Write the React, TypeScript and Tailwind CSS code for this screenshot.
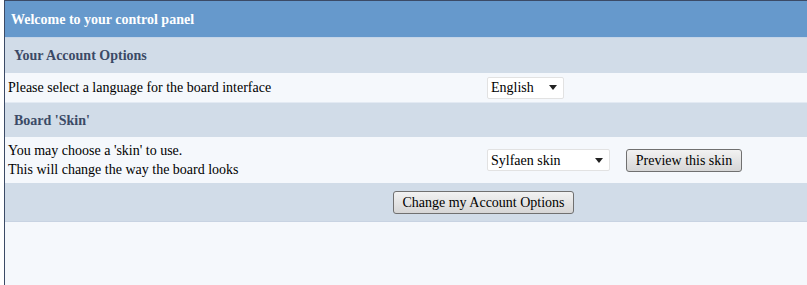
export default function App() {
  return (
    <div className="h-[285px] w-[807px] overflow-hidden bg-white pl-[4px] font-['Liberation_Serif','Times_New_Roman',serif]">
      <div className="h-[300px] w-[960px] border-l border-t border-[#3b4a66] bg-[#f5f8fc] text-[14px] text-black">
        <div className="flex h-[37px] items-center border-b border-[#c5d5e8] bg-[#6699cc] pl-[6px] font-bold text-white">
          Welcome to your control panel
        </div>

        <div className="flex h-[35px] items-center bg-[#d1dce8] pl-[9px] font-bold text-[#3b4a66]">
          Your Account Options
        </div>
        <div className="flex h-[30px] items-center border-b border-[#e3eaf3]">
          <div className="w-[482px] pl-[3px]">Please select a language for the board interface</div>
          <div className="flex h-[22px] w-[77px] items-center justify-between rounded-[2px] border border-[#e2e2e2] bg-white pl-[3px] pr-[6px]">
            <span>English</span>
            <Caret />
          </div>
        </div>

        <div className="flex h-[34px] items-center bg-[#d1dce8] pl-[9px] font-bold text-[#3b4a66]">
          Board 'Skin'
        </div>
        <div className="flex h-[46px] items-center">
          <div className="w-[482px] pl-[3px] leading-[19px]">
            <div>You may choose a 'skin' to use.</div>
            <div>This will change the way the board looks</div>
          </div>
          <div className="flex h-[22px] w-[123px] items-center justify-between rounded-[2px] border border-[#e2e2e2] bg-white pl-[3px] pr-[6px]">
            <span>Sylfaen skin</span>
            <Caret />
          </div>
          <button className="ml-[16px] h-[23px] w-[116px] rounded-[3px] border border-[#707070] bg-gradient-to-b from-[#f2f2f2] to-[#d6d6d6]">
            Preview this skin
          </button>
        </div>

        <div className="flex h-[39px] items-center border-b border-[#c8d3e2] bg-[#d1dce8] pl-[388px]">
          <button className="h-[23px] w-[181px] rounded-[3px] border border-[#707070] bg-gradient-to-b from-[#f2f2f2] to-[#d6d6d6]">
            Change my Account Options
          </button>
        </div>
      </div>
    </div>
  );
}

function Caret() {
  return (
    <svg width="8" height="5" viewBox="0 0 8 5">
      <path d="M0 0h8L4 5z" fill="#222" />
    </svg>
  );
}
